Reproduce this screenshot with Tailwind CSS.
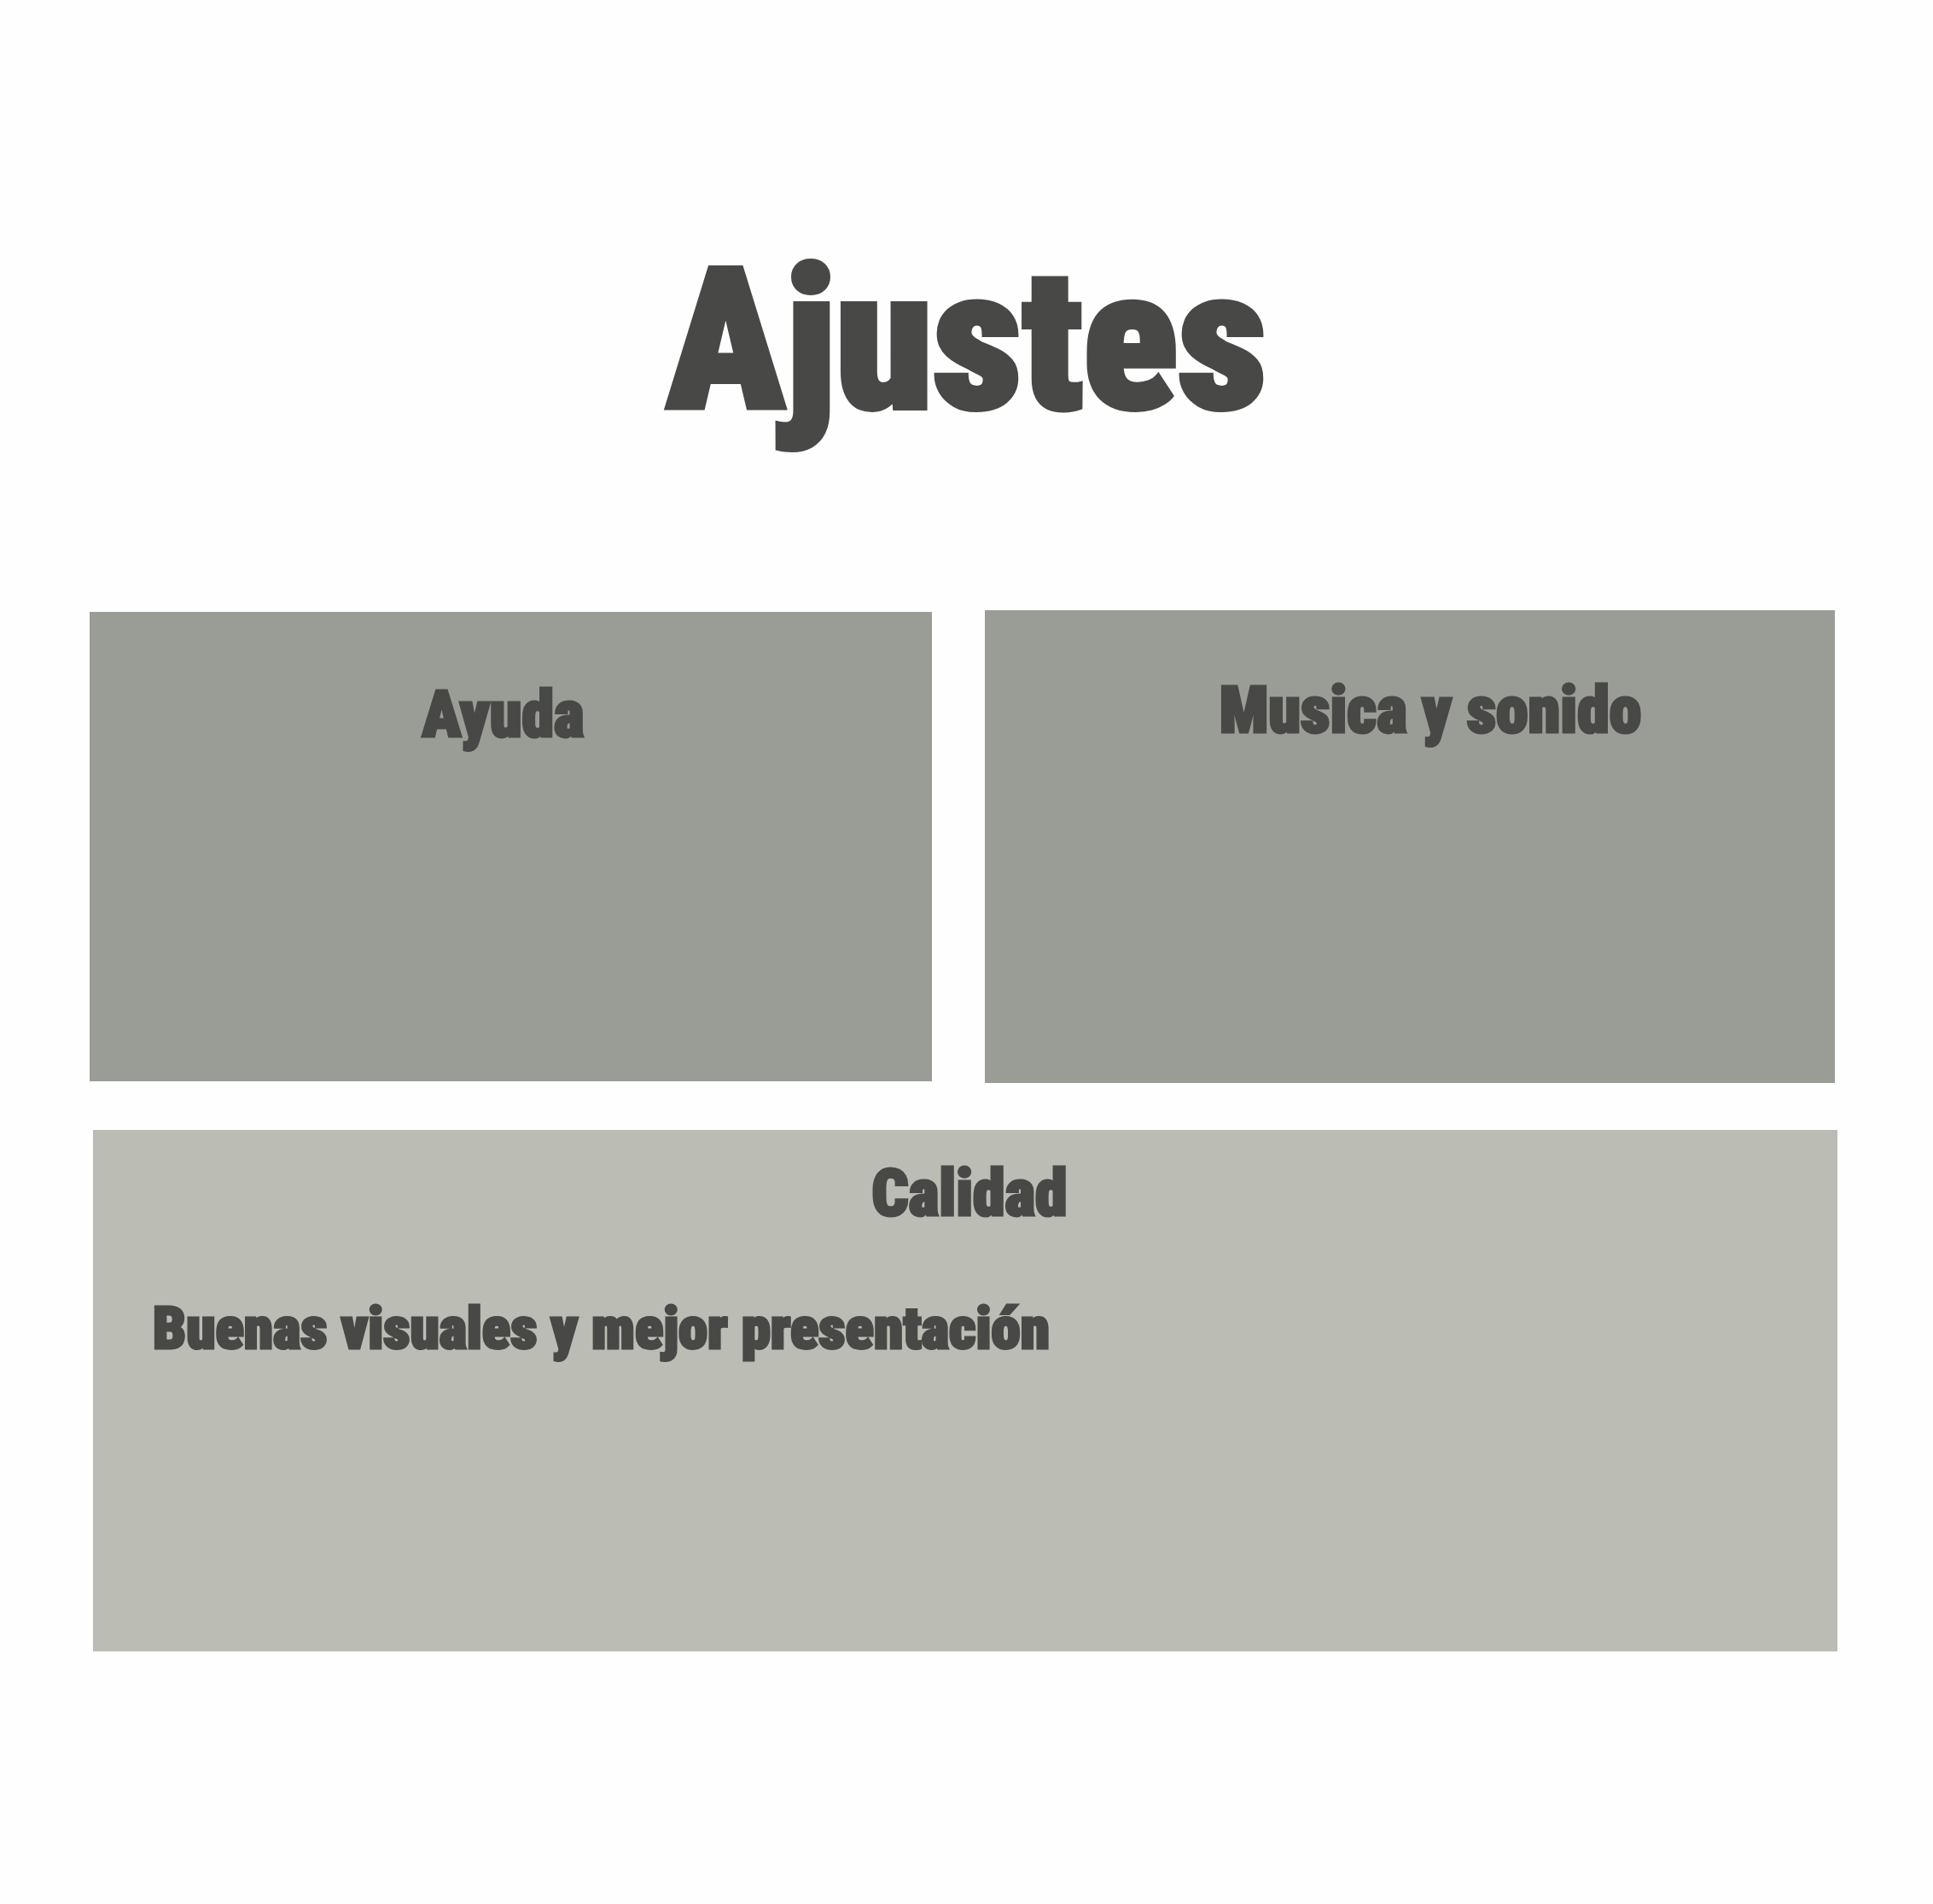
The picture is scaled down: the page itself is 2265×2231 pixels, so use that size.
<!DOCTYPE html>
<html lang="es">
<head>
<meta charset="utf-8">
<meta name="viewport" content="width=device-width, initial-scale=1">
<title>Ajustes</title>
<script src="https://cdn.jsdelivr.net/npm/@tailwindcss/browser@4"></script>
</head>
<body class="min-h-screen bg-[#fefefe] font-['Roboto_Condensed',Roboto,sans-serif] font-black text-[#484846]">
<main class="pt-[285px] pb-24">
  <h1 class="text-center text-[230px] leading-none [-webkit-text-stroke:6px_#484846]">Ajustes</h1>
  <div class="mt-[200px] grid grid-cols-[987fr_996fr] items-start gap-[62px] pl-[105px] pr-[115px]">
    <section class="mt-0.5 h-[550px] bg-[#9a9d95] pt-[82px] pr-[18px]">
      <h2 class="text-center text-[76px] leading-none [-webkit-text-stroke:3px_#484846]">Ayuda</h2>
    </section>
    <section class="h-[554px] bg-[#9a9d95] pt-[79px] pl-12">
      <h2 class="text-center text-[76px] leading-none [-webkit-text-stroke:3px_#484846]">Musica y sonido</h2>
    </section>
  </div>
  <section class="mt-[55px] mr-28 ml-[109px] h-[611px] bg-[#bbbcb4] pt-9 pl-[10px]">
    <h2 class="text-center text-[76px] leading-none [-webkit-text-stroke:3px_#484846]">Calidad</h2>
    <p class="mt-[86px] ml-[60px] text-[69px] leading-none [-webkit-text-stroke:3px_#484846]">Buenas visuales y mejor presentación</p>
  </section>
</main>
</body>
</html>
